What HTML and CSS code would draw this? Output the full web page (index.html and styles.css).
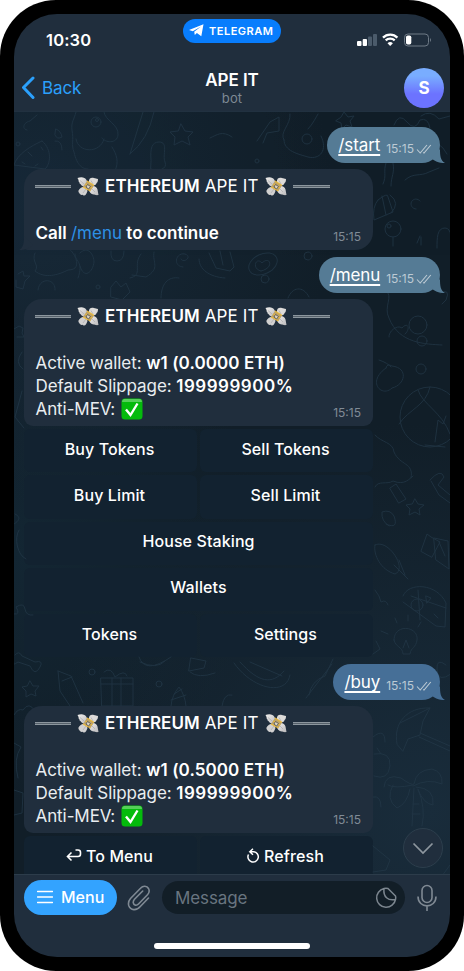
FILE: index.html
```html
<!DOCTYPE html>
<html lang="en">
<head>
<meta charset="utf-8">
<title>APE IT</title>
<link rel="stylesheet" href="styles.css">
</head>
<body>
<svg class="defs" width="0" height="0" aria-hidden="true">
  <linearGradient id="wing" x1="0" y1="0" x2="1" y2="1"><stop offset="0" stop-color="#f2f0ee"/><stop offset="1" stop-color="#b9b8ba"/></linearGradient>
  <symbol id="money" viewBox="0 0 22 20">
    <path d="M.5 1C4-.3 8 0 9.500 3L11 6.500 7 9.500C4 9 4 7 2.500 6.500 3 5.500 1.500 4.500 1.500 4 2 3 .8 2 .5 1Z" fill="url(#wing)"/>
    <path d="M12 5C11.500 2 13.500.5 16 .8L21 2C21 4.500 20.500 5.500 19.500 6 19.500 7.500 18 8.500 16 8.500Z" fill="#dddbd9"/>
    <path d="M9 10C6 9 3 11 1.500 13.500 1 15.500 2.500 15.500 2.500 16.500 3.500 18.500 6 17.500 6.500 18.500 8.500 19 9.500 17 10.500 14Z" fill="#d1d0d0"/>
    <path d="M12 13L16 9C18 9 20 10.500 20.500 12.500L21.500 18C19 18.500 17.500 17.500 16.500 17.500 14 17 12.500 15.500 12 13Z" fill="url(#wing)"/>
    <path d="M3 3.500 7 7M14 3.500 16 7M6 16l3-4M18 15l-3-3" stroke="#aaa9ac" stroke-width=".7"/>
    <path d="M10 4 17 8.500 13.500 14 6 10Z" fill="#bda368"/>
    <path d="M10 4 17 8.500M8.500 7 15 11M6 10 13.500 14" stroke="#e8b83d" stroke-width="1.200"/>
    <path d="M10.500 7.500 13.500 9.500 11.500 12 9 10Z" fill="#d7d1c2" stroke="#4b4b50" stroke-width=".8"/>
  </symbol>
  <symbol id="check" viewBox="0 0 22 22">
    <rect x=".5" y=".5" width="21" height="21" rx="3.500" fill="#04bb0c"/>
    <path d="M3 1h16q2 .5 2 3H1q0-2.500 2-3Z" fill="#55cf59"/>
    <path d="M5 11.500 9.500 17 16.500 5.500" fill="none" stroke="#fff" stroke-width="2.400"/>
  </symbol>
  <symbol id="read" viewBox="0 0 16 10"><path d="M1 5.500 4.200 9 11 1M7.200 8.500 8 9 14.800 1" fill="none" stroke="currentColor" stroke-width="1.100"/></symbol>
  <symbol id="tail" viewBox="0 0 14 14"><path d="M9 0C9 7 9.500 11.500 14 14 8 14.300 4 12.500 0 9Z" fill="currentColor"/></symbol>
</svg>

<div class="phone"><div class="screen">
  <header class="top">
    <div class="status">
      <div class="clock">10:30</div>
      <div class="source">
        <svg width="15" height="13" viewBox="0 0 15 13"><path d="M0 6 14.500.3 12.300 12.300 7.900 9.100 5.800 11.100 5.200 7.700 12 2.400 3.800 7.300Z" fill="#fff"/></svg>
        <span>TELEGRAM</span>
      </div>
      <svg class="signals" width="76" height="14" viewBox="0 0 76 14">
        <rect x="0" y="8" width="4.500" height="5" rx="1" fill="#fff"/><rect x="5.700" y="6" width="4.300" height="7" rx="1" fill="#fff"/>
        <rect x="11" y="3.500" width="4" height="9.500" rx="1" fill="#4b5b6b"/><rect x="16" y="1" width="4" height="12" rx="1" fill="#4b5b6b"/>
        <path d="M26 4.600a10 10 0 0 1 14.400 0M28.700 7.400a6.500 6.500 0 0 1 9 0" fill="none" stroke="#fff" stroke-width="2.300"/><path d="M30.500 10.200q2.700-2.400 5.400 0L33.200 13Z" fill="#fff"/>
        <rect x="47.500" y="1" width="24" height="12" rx="3.500" fill="none" stroke="#6e7a86"/><rect x="49" y="2.500" width="5.300" height="9" rx="1.800" fill="#fff"/><path d="M73 5q2 2 0 4Z" fill="#6e7a86"/>
      </svg>
    </div>
    <div class="nav">
      <a class="back"><svg width="14" height="24" viewBox="0 0 14 24"><path d="M12 2 2.500 11.500 12 21.500" fill="none" stroke="#2ba0fc" stroke-width="3" stroke-linecap="round" stroke-linejoin="round"/></svg><span>Back</span></a>
      <div class="title"><b>APE IT</b><small>bot</small></div>
      <div class="avatar">S</div>
    </div>
  </header>

  <main class="chat">
    <svg class="doodles" width="436" height="762" viewBox="14 112 436 762">
      <g id="bear"><path d="M76 112c-2 8-5 10-4 18 2 10-1 15 2 22 3 14 9 17 14 17M104 112c1 9 15 12 14 23-1 9-13 8-16 3M76 139c2 14 24 15 28 0M112 147c5 8 7 15 3 24"/><circle cx="96" cy="122" r="5"/><circle cx="97" cy="120" r="1.500"/></g>
      <path d="M27 130c-6-1-3-8 3-9l7-6M42 141c-11 5-25 13-28 24M42 141c11 9 8 24 3 28l-31-4M28 152l4 4M41 147l2 3M22 162l3 2M38 164l-3 2M56 129q5 2 6 8-5 3-7-2ZM55 141q7-1 7 9M130 154l13-42M130 154q18-14 24-42M151 160c-1-12 1-18 8-18 10 0 3 13 6 20s-7 10-14 7Z"/>
      <path d="M181 124l4 7 8 1-5 5 2 8-8-4-8 4 1-8-5-5 8-1ZM210 138c7-3 12-8 22-1M257 141l13-19 9-5v14l-12 2-4 10M284 140c-5-8 7-15 6-26M284 140c0 11 14 14 24 17 12 3 20-7 13-21M308 129c5-5 8-12 10-15"/><circle cx="307" cy="139" r="5"/><circle cx="257" cy="161" r="2"/><circle cx="18" cy="144" r="2"/>
      <path d="M341 117l3-5 4 5 6-1-4 5 2 6-6-2-4 4-1-6-5-2ZM394 125q5-13 13-3t13-2q8-3 10 8M421 116q9-7 18 3l11-3M411 142q6 7 17 2t19 10"/>
      <path d="M386 163c-3 9 1 12-3 21M393 163c2 10-2 13-2 23M405 180c9-8 15-3 24-8l10-4M378 200q10-8 10-3l5 15-19 8q-2-13 4-20ZM382 196l4 19M390 195q11 8 1 18"/><circle cx="393" cy="229" r="8"/><circle cx="389" cy="226" r="2"/><path d="M393 237v9M437 248c0-10 0-20 8-20q5 0 6 8M416 209a5 5 0 1 1 4-8M421 245v-8M417 243l3-7"/>
      <path d="M35 253c-4 9 5 12 0 18 10 8 23 4 33-1 17 0 5-20 0-22M75 254c0 8 9 7 3 24M80 253c8-8 14 2 14 9-1 10-10 18-14 4M141 254c-9 11 3 21-11 24M154 252c-2 11 7 16-8 25l-14-2M18 274l5-3 1 5 6 0-5 5-2 8-7-2v-7M111 251q-1 10 6 10t7-10"/><path d="M183 267c-11-1-7-15 2-13 8 3-2 10-4 5M199 259c0 10 10 18 26 19M209 253l7 15 14 3 4-4-4-15M220 251l3 14M38 290c1-13 18-12 17 0M111 287l5-6 5 6 5-4 4 9-8 8-11-3ZM161 298c0-14 7-22 18-20"/><ellipse cx="263" cy="264" rx="15" ry="10" transform="rotate(-25 263 264)"/><path d="M261 271c-10-2-5-15 1-8 8-8 13 5-1 8M288 298c4-11 15-13 21-1"/><circle cx="98" cy="287" r="2"/><circle cx="265" cy="279" r="4"/><circle cx="308" cy="256" r="4"/>
      <path d="M14 329l5-3 4 2-1 5 2 4-7 0M22 352q-8 11 1 17M22 391l-7 26 9 11M386 291c8 5-3 16 3 27 10 26 37 26 53 27M389 337c-1-5 8-13 13-9 6-7 9 1 3 6M440 293q11-5 6 7l-4 4M386 368c-20 14-4 30 6 20 13-3 17-20 0-22Q387 363 386 368ZM379 360q9 3 12 7"/><circle cx="418" cy="325" r="9"/><circle cx="422" cy="341" r="5"/><circle cx="421" cy="369" r="5"/><circle cx="430" cy="417" r="30"/><path d="M418 390c4 14 24 22 32 44M430 387c-4 19-21 22-31 37M435 442l3-22 5 4 3-8M425 445l20 2"/>
      <path d="M375 435c7 8 18 7 19 17 6 14 20 10 17 26M375 487c3-7 12-2 18-6 12 5 17-3 20-5M390 488l6-4 10 15-7 4ZM430 480q11-12 14-3l-6 8 12 10M431 481l8 14 11 8M415 499l3 5 6 1-5 4 1 6-5-3-6 3 1-6-4-4 6-1ZM389 526q-8-5-7-14 8-3 12 4 5 14-8 8M375 545c13-7 33 24 20 29-14-4-22-19-20-29ZM394 565l14 14M399 560l6 15M421 551l6-17 4 3 9 5-8 15ZM434 538l14 3 1 28-13-9ZM439 542l6 14M403 596c5-14 34-13 43 7l-1 24-9-1-33-24M411 596l35 12M418 590l2 30M426 596l5 2-4 5ZM434 614l4 4"/><circle cx="417" cy="605" r="6"/><path d="M394 640c0-17 25-14 23 0-1 8-6 7-7 14h-7c0-7-8-7-9-14ZM403 648l3-8 3 8M388 634l-7-3M397 623l-2-5M408 621v-6M418 627l3-5M446 665q-10-8-9 5t14 4M375 590q5 6 6 12 5-3 7 3M373 654l7-5-4-8"/>
      <path d="M15 514c8 4 2 8-1 10M19 530c-5 8-2 25 7 29M14 614q7 1 2-7 8-5 9 2t8 6M15 655q4-5 7 1l13 6q9-2 5 5-5 10-10-1l-12-4q-6 4-4 1M139 657q6 18 32 0M191 658l15 3-2 7-15 3ZM234 663c18 26 52 34 56 12M240 662c19 21 32 23 44 9M250 662l32 14M309 695q2-14 16-19l8-17M306 698l26-34"/>
      <path d="M58 671l13 5 12 27M58 671l2 20 10 15M62 681l10-4M101 678h32v28h-31ZM112 678v29M121 678v29M101 684h32M104 672q7-6 11 5 10-8 12-1M30 681l3 5 6 0-4 5 1 5-5-2-5 3 0-6-4-4 5-1ZM14 715q4-7 9-5 6-9 12 1M171 706q1-11 8-19 6 8 7 19M174 694l8-5M171 700l15-5M140 662q17 8 25-1M190 672q8 7 25 1M222 706q2-13 10-11M14 743l7 4q-8 12-3 31M14 790l9 3-1 20-8 2"/><circle cx="92" cy="672" r="3"/><circle cx="159" cy="684" r="3"/>
      <path d="M397 744c-4-21 10-37 33-36l-7 13-3 14-12 4-5 12ZM420 733l30 13M419 737l31 14M430 708l-30 15M374 754q17-3 16 12-2 15-16 10M377 748l4 6M373 737q12-10 12 5M384 787q1-14 17-9 11 8 13 6 2-14 18-15 11 3 10 15-14-6-29 2M413 785q-19 4-25 0M393 785q-8 14 4 23 10-4 13-19M416 787q19 1 17 18-9-1-15-15M414 788l-2 38M418 789q8 19 4 37M413 804h6M412 814h8M373 797q8-2 8 10M373 846l17 14-4 10-13 2M442 876l8-11"/>
    </svg>

    <div class="mine">
      <u>/start</u><time>15:15</time><svg class="ticks"><use href="#read"/></svg><svg class="tail"><use href="#tail"/></svg>
    </div>

    <section class="bot first">
      <div class="heading"><i class="rule"></i><svg class="money"><use href="#money"/></svg><span><b>ETHEREUM</b> APE IT</span><svg class="money"><use href="#money"/></svg><i class="rule split"></i></div>
      <p class="call"><b>Call <a>/menu</a> to continue</b></p>
      <time>15:15</time>
      <svg class="bot-tail"><use href="#tail"/></svg>
    </section>

    <div class="mine second">
      <u>/menu</u><time>15:15</time><svg class="ticks"><use href="#read"/></svg><svg class="tail"><use href="#tail"/></svg>
    </div>

    <section class="bot">
      <div class="heading"><i class="rule"></i><svg class="money"><use href="#money"/></svg><span><b>ETHEREUM</b> APE IT</span><svg class="money"><use href="#money"/></svg><i class="rule split"></i></div>
      <p class="w">Active wallet: <b>w1 (0.0000 ETH)</b></p>
      <p class="s">Default Slippage: <b>199999900%</b></p>
      <p class="m">Anti-MEV: <svg class="check"><use href="#check"/></svg></p>
      <time>15:15</time>
    </section>
    <div class="keys">
      <button>Buy Tokens</button><button>Sell Tokens</button>
      <button>Buy Limit</button><button>Sell Limit</button>
      <button class="wide">House Staking</button>
      <button class="wide">Wallets</button>
      <button>Tokens</button><button>Settings</button>
    </div>

    <div class="mine third">
      <u>/buy</u><time>15:15</time><svg class="ticks"><use href="#read"/></svg><svg class="tail"><use href="#tail"/></svg>
    </div>

    <section class="bot">
      <div class="heading"><i class="rule"></i><svg class="money"><use href="#money"/></svg><span><b>ETHEREUM</b> APE IT</span><svg class="money"><use href="#money"/></svg><i class="rule split"></i></div>
      <p class="w">Active wallet: <b>w1 (0.5000 ETH)</b></p>
      <p class="s">Default Slippage: <b>199999900%</b></p>
      <p class="m">Anti-MEV: <svg class="check"><use href="#check"/></svg></p>
      <time>15:15</time>
    </section>
    <div class="keys">
      <button><svg width="16" height="13" viewBox="0 0 16 13"><path d="M9.500 1H12Q14.500 1 14.500 3.500V5Q14.500 7.500 12 7.500H2M5.500 3.500 1.500 7.500 5.500 11.500" fill="none" stroke="#fff" stroke-width="1.600"/></svg>To Menu</button>
      <button><svg class="refresh" width="13" height="15" viewBox="0 0 13 15"><path d="M1.500 6.500A5.200 5.200 0 1 0 6.500 3.700H2.500M6 .8 2.800 3.700 6 6.700" fill="none" stroke="#fff" stroke-width="1.500"/></svg>Refresh</button>
    </div>

    <div class="scroll"><svg width="22" height="13" viewBox="0 0 22 13"><path d="M1.500 1.500 11 11 20.500 1.500" fill="none" stroke="#8e979f" stroke-width="1.700"/></svg></div>
  </main>

  <footer class="bottom">
    <div class="composer">
      <div class="menu"><svg width="16" height="14" viewBox="0 0 16 14"><path d="M.5 1.500h15M.5 7h15M.5 12.500h15" stroke="#fff" stroke-width="1.500" stroke-linecap="round"/></svg><span>Menu</span></div>
      <svg class="clip" width="24" height="26" viewBox="0 0 24 26"><path d="M21.500 13 13.300 21.500C9.500 26 3.500 25.500 1.800 20.800 1 18 1.500 15.800 3.500 13.500L13.500 3.200C16 .5 20 .8 21.500 3.500 22.700 5.800 22.200 8 20.500 9.800L11.500 19C9.500 21 6.700 20.300 6.300 17.900 6 16.200 6.500 15.400 7.500 14.300L15.700 6" fill="none" stroke="#7f8993" stroke-width="1.600" stroke-linecap="round"/></svg>
      <div class="input"><span>Message</span><svg width="22" height="22" viewBox="0 0 22 22"><path d="M9 1.500A9.500 9.500 0 1 0 20.500 12.500M9 1.500C10 1.200 11.500 1 13 1.500L20.500 9Q21 10.500 20.500 12.500C13 14 8 10 9 1.500Z" fill="none" stroke="#7b858e" stroke-width="1.500" stroke-linejoin="round"/></svg></div>
      <svg class="mic" width="20" height="28" viewBox="0 0 20 28"><rect x="5" y="1.500" width="10" height="17" rx="5" fill="none" stroke="#7f8993" stroke-width="1.600"/><path d="M1 12.500C1 25 19 25 19 12.500M10 22V27" fill="none" stroke="#7f8993" stroke-width="1.600"/></svg>
    </div>
    <div class="home"></div>
  </footer>
</div></div>
</body>
</html>
```
FILE: styles.css
```css
* { box-sizing: border-box; }
body { margin: 0; background: #fff; font-family: Inter, "Liberation Sans", sans-serif; color: #fff; }
.defs { position: absolute; }
.phone { width: 464px; height: 971px; padding: 14px; background: #000; border-radius: 56px; }
.screen { width: 436px; height: 943px; border-radius: 43px; overflow: hidden; background: #202e3d; display: flex; flex-direction: column; }

.top { height: 98px; flex: none; border-bottom: 1px solid #213140; }
.status { height: 48px; display: grid; grid-template-columns: 169px 98px 1fr; align-items: start; }
.clock { padding: 16px 0 0 32px; font-size: 16.5px; line-height: 20px; font-weight: 600; letter-spacing: .15px; }
.source { margin-top: 5px; height: 23.500px; border-radius: 12px; background: #087dfd; display: flex; align-items: center; padding-left: 6px; gap: 5px; font-size: 11px; font-weight: 600; letter-spacing: .5px; }
.signals { justify-self: end; margin: 19px 17px 0 0; }
.nav { height: 49px; display: grid; grid-template-columns: 150px 1fr 150px; align-items: center; }
.back { display: flex; align-items: center; gap: 7px; padding-left: 7px; margin-top: 3px; color: #2ba0fc; font-size: 17px; letter-spacing: -.1px; }
.title { display: flex; flex-direction: column; align-items: center; padding-top: 3px; }
.title b { font-size: 17px; line-height: 20px; font-weight: 600; letter-spacing: -.05px; }
.title small { font-size: 13px; line-height: 17px; color: #7e8994; letter-spacing: .1px; }
.avatar { justify-self: end; margin: 3px 6px 0 0; width: 40px; height: 40px; border-radius: 50%; background: linear-gradient(#79adff 20%, #6c73ff 65%); font-size: 17px; font-weight: 700; display: grid; place-items: center; }

.chat { position: relative; flex: none; height: 762px; overflow: hidden; padding: 15px 10px 0; background: radial-gradient(circle at 5% 12%, #172938 0, transparent 38%), radial-gradient(circle at 95% 92%, #192c3b 0, transparent 48%), radial-gradient(circle at 0 58%, #132633 0, transparent 40%), #111e28; display: flex; flex-direction: column; align-items: flex-start; }
.doodles { position: absolute; left: 0; top: 0; fill: none; stroke: #243949; stroke-width: 1; stroke-linecap: round; stroke-linejoin: round; opacity: .72; }
.mine { position: relative; flex: none; align-self: flex-end; height: 36px; border-radius: 18px; background: #557b95; color: #557b95; display: flex; align-items: flex-start; padding: 7px 8px 0 11px; }
.mine u { color: #fff; font-size: 17px; line-height: 22px; letter-spacing: -.1px; text-underline-offset: 3px; text-decoration-thickness: 1.500px; text-decoration-skip-ink: none; }
.mine time { color: #bccad4; font-size: 12px; line-height: 16px; margin: 7px 2px 0 6px; }
.ticks { width: 16px; height: 10px; color: #bccad4; margin-top: 10px; }
.tail { position: absolute; right: -5px; bottom: 0; width: 14px; height: 14px; }
.second { height: 35.500px; margin-top: 6.500px; }
.third { height: 35.500px; margin-top: 6.750px; background: #466f97; color: #466f97; }

.bot { position: relative; width: 349px; height: 127px; margin-top: 6.500px; flex: none; border-radius: 18px 18px 9px 9px; background: #202e3d; padding: 6px 11px; font-size: 17px; line-height: 23px; }
.first { height: 81px; border-radius: 18px 18px 18px 4px; margin-top: 6px; }
.second { margin-top: 7px; }
.bot-tail { position: absolute; left: -5px; bottom: 0; width: 14px; height: 14px; color: #202e3d; transform: scaleX(-1); }
.heading { height: 23px; display: flex; align-items: center; margin-bottom: 24px; }
.heading span { width: 154px; margin: 0 6px; white-space: nowrap; letter-spacing: .1px; }
.rule { width: 36px; height: 3px; border: solid #8c969e; border-width: 1px 0; background: #56616b; margin-right: 6px; flex: none; }
.split { width: 37px; margin: 0 0 0 6px; }
.money { width: 22px; height: 20px; flex: none; }
.bot b { font-weight: 600; }
.bot p { margin: 0; padding-left: .5px; white-space: nowrap; color: #e9edf0; }
.bot p b { color: #fff; }
.bot .call { letter-spacing: 0; }
.call a { color: #2e91e6; font-weight: 400; }
.w, .s, .m { letter-spacing: -.08px; }
.w b { letter-spacing: .08px; }
.s b { letter-spacing: .5px; }
.check { width: 22px; height: 22px; vertical-align: -5px; margin-left: 1px; }
.bot time { position: absolute; right: 12px; bottom: 5px; font-size: 12px; line-height: 16px; color: #808b96; }
.keys { width: 349px; flex: none; padding-top: 3px; display: grid; grid-template-columns: 1fr 1fr; gap: 3px; }
.keys button { height: 43.250px; border: 0; border-radius: 6px; padding: 0 2px 4px 0; background: #122230; color: #fff; font: 500 16px/20px Inter, sans-serif; letter-spacing: .1px; display: flex; align-items: center; justify-content: center; gap: 4px; }
.keys .wide { grid-column: 1 / 3; padding-right: 0; }
.scroll { position: absolute; right: 7px; top: 716px; width: 40px; height: 40px; border: 1px solid #2c3e4c; border-radius: 50%; background: #202e3d; display: grid; place-items: center; }

.bottom { flex: 1; border-top: 1px solid #2c3c4a; display: flex; flex-direction: column; align-items: center; }
.composer { width: 100%; display: flex; align-items: center; padding: 5px 12px 0 10px; }
.menu { width: 93px; height: 35px; border-radius: 18px; background: #33a3ff; display: flex; align-items: center; gap: 8px; padding: 0 0 1px 13px; font-size: 16px; font-weight: 500; }
.clip { margin-left: 10px; }
.input { margin-left: 11px; width: 243px; height: 33px; border-radius: 17px; background: #121e27; color: #697580; font-size: 17px; letter-spacing: -.1px; display: flex; align-items: center; justify-content: space-between; padding: 0 8px 0 13px; }
.mic { margin-left: 12px; }
.home { width: 156px; height: 6px; border-radius: 3px; background: #fff; margin-top: 28px; }
```
